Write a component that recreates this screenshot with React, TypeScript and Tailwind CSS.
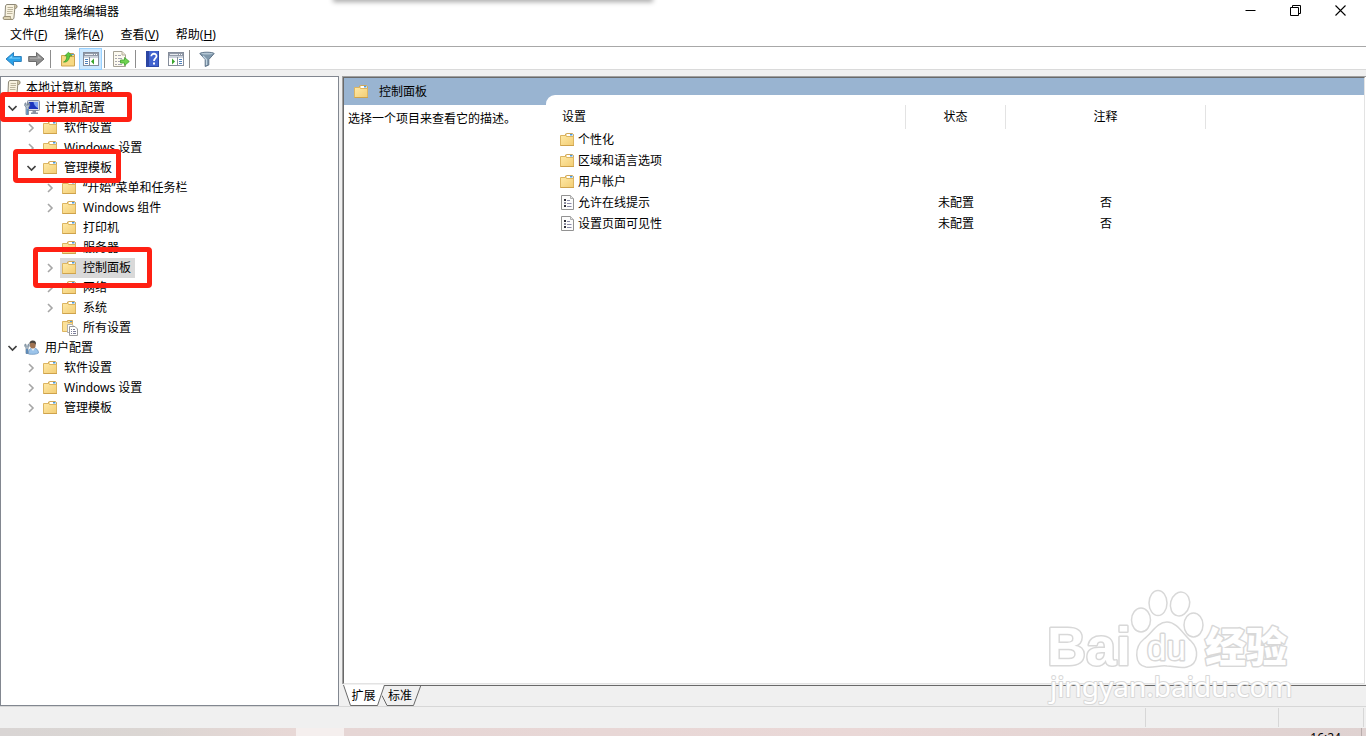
import type { ReactNode } from 'react';

function FolderIcon() {
  return (
    <svg width="16" height="16" viewBox="0 0 16 16" className="shrink-0" aria-hidden="true">
      <defs>
        <linearGradient id="folderFill" x1="0" y1="0" x2="1" y2="1">
          <stop offset="0" stopColor="#ffe9a6" />
          <stop offset="1" stopColor="#f2cd74" />
        </linearGradient>
      </defs>
      <path d="M5.500 4V2L6.500 1.500H12.500L13.500 2.500V5H5.500Z" fill="#f6dc97" stroke="#cfa75b" />
      <path d="M7 2H13V4H7Z" fill="#fff" />
      <path d="M10 2H12.500V3.500H10Z" fill="#4b9be0" />
      <path d="M.5 3.500H5.500L6.500 4.500H13.500V13.500H.5Z" fill="url(#folderFill)" stroke="#dcb562" />
      <path d="M.5 13.500H14" stroke="#cfa34c" />
    </svg>
  );
}

function SettingIcon() {
  return (
    <svg width="16" height="16" viewBox="0 0 16 16" className="shrink-0" aria-hidden="true">
      <path d="M1.500.5H10.500L13.500 3.500V14.500H1.500Z" fill="#fcfcfc" stroke="#929292" />
      <path d="M10.500.5V3.500H13.500" fill="#e4e4e4" stroke="#b0b0b0" />
      <path d="M4 4H6V6H4ZM4 10H6V12H4Z" fill="#2e2e38" />
      <path d="M4 7H6V9H4Z" fill="#8c8ca0" />
      <path d="M7 5.500H10M7 8.500H11.500M7 11.500H11.500" stroke="#8a8aa8" />
    </svg>
  );
}

function ScrollIcon() {
  return (
    <svg width="16" height="16" viewBox="0 0 16 16" className="shrink-0" aria-hidden="true">
      <path d="M4.500.5H13.500C15.500.5 15.500 4.500 13.500 4.500H12.800L12 13C12 14.500 11.500 15.500 10 15.500H2.500C.7 15.500.7 12.500 2.500 12.500H3L3.500 2Z" fill="#f8f2df" stroke="#8d8878" />
      <path d="M3 12.500H8.500C8.200 14 8.800 15.500 10.300 15.500H2.500C1 15.500 1 12.500 3 12.500Z" fill="#ddd3b4" stroke="#9b9177" />
      <path d="M12.700 4.500V2C12.700 1.200 13 .5 13.500.5C15 1 15 4 13.500 4.500Z" fill="#d8cfb4" stroke="#9b9177" />
      <path d="M5.500 3.500H11M5.500 5.500H11M5 7.500H10.500M5 9.500H10.500" stroke="#bdb59d" />
    </svg>
  );
}

function ComputerIcon() {
  return (
    <svg width="16" height="16" viewBox="0 0 16 16" className="shrink-0" aria-hidden="true">
      <rect x="3.500" y=".5" width="12" height="10" rx="1" fill="#d9dce4" stroke="#8990a0" />
      <rect x="5" y="2" width="9" height="7" fill="#1c34bd" />
      <path d="M9.500 2H14V8C12 7.500 10 5 9.500 2Z" fill="#7da0f0" />
      <path d="M8.500 11H12V12.500H14V14H7V12.500H8.500Z" fill="#8b93a3" />
      <path d="M.8 3.500V6L2 7V14.500H4.500V7L5.700 6V3.500L4.500 2.800V5H2V2.800Z" fill="#b4c0cc" stroke="#63768a" strokeWidth=".7" />
      <rect x="2.500" y="9" width="1.600" height="5.500" fill="#5f8fc0" />
    </svg>
  );
}

function UserIcon() {
  return (
    <svg width="16" height="16" viewBox="0 0 16 16" className="shrink-0" aria-hidden="true">
      <path d="M4.500 14C4.200 10 6 8 9 8C12.500 8 14.500 10 14.500 13C12 14.500 8 14.500 4.500 14Z" fill="#9cc4ea" stroke="#6f97c0" strokeWidth=".8" />
      <path d="M7 8L9 11L11 8Z" fill="#eef4fa" />
      <ellipse cx="8.800" cy="5" rx="2.900" ry="3.500" fill="#a07352" />
      <path d="M5.600 4.500C5.100 1.500 6.800.5 8.800.5C11.300.5 12.600 2 11.800 5C11.300 3 9.500 3 8 2.800C6.900 2.800 6.200 3.500 5.600 4.500Z" fill="#4a443e" />
      <path d="M.8 4.500V6.500L2 7.500V13.500H4V7.500L5.200 6.500V4.500L4.200 4V6H1.900V4Z" fill="#b9c5d0" stroke="#65788a" strokeWidth=".7" />
      <rect x="2.200" y="9" width="1.600" height="4.500" fill="#4f83b8" />
    </svg>
  );
}

function AllSettingsIcon() {
  return (
    <svg width="16" height="16" viewBox="0 0 16 16" className="shrink-0 overflow-visible" aria-hidden="true">
      <path d="M5.500 3V.5H10.500V4H5.500Z" fill="#f6dc97" stroke="#cfa75b" />
      <path d="M8 1H10V2H8Z" fill="#4b9be0" />
      <path d="M.5 1.500H5L6 2.500H10.500V11.500H.5Z" fill="#fbe19a" stroke="#dcb562" />
      <path d="M5.500 4.500H10L12 6.500V12.500H5.500Z" fill="#fff" stroke="#b0b0b0" />
      <path d="M7.500 6.500H13L15.500 9V15.500H7.500Z" fill="#fff" stroke="#9a9a9a" />
      <path d="M9 9.500H10M11 9.500H13M9 11.500H10M11 11.500H14M9 13.500H10M11 13.500H14" stroke="#7d7f9a" />
    </svg>
  );
}

function ArrowIcon({ forward = false }: { forward?: boolean }) {
  return (
    <svg width="17" height="16" viewBox="0 0 17 16" aria-hidden="true">
      {forward ? (
        <>
          <path d="M.7 5.500H8.500V1.500L16 8L8.500 14.500V10.500H.7Z" fill="#8e8e8e" stroke="#6c6c6c" />
          <path d="M2 6.800H9.800V4.500L13.500 7.500H2Z" fill="#b9b9b9" />
        </>
      ) : (
        <>
          <path d="M16.300 5.500H8.500V1.500L1 8L8.500 14.500V10.500H16.300Z" fill="#2ba3ea" stroke="#2f80bc" />
          <path d="M15 6.800H7.200V4.500L3.500 7.500H15Z" fill="#83d2fb" />
        </>
      )}
    </svg>
  );
}

function UpFolderIcon() {
  return (
    <svg width="16" height="16" viewBox="0 0 16 16" aria-hidden="true">
      <path d="M8.500 4V2.500H13.500L14.500 3.500V6H8.500Z" fill="#f6dc97" stroke="#c49b50" />
      <path d="M11 3H14V4H11Z" fill="#5b9fdd" />
      <path d="M1.500 4.500H7L8 5.500H14.500V15H1.500Z" fill="#f7d983" stroke="#cda44f" />
      <path d="M3.500 11C5.500 10.500 6.800 8 6.800 4.800H4.800L8.500 1.200L12 4.800H9.600C9.600 8.500 7 11.800 3.500 11Z" fill="#5cc93f" stroke="#3a9a28" strokeWidth=".7" />
    </svg>
  );
}

function PaneIcon({ side }: { side: 'left' | 'right' }) {
  return (
    <svg width="16" height="16" viewBox="0 0 16 16" aria-hidden="true">
      <rect x=".5" y="1.500" width="15" height="13" fill="#fff" stroke="#858d9b" />
      <path d="M1 2H15V5H1Z" fill="#939ba9" />
      <path d="M2 3.500H10" stroke="#e8ebef" />
      <path d="M11 3.500H12M13 3.500H14" stroke="#fff" />
      <path d="M1 5.500H15M1 6.500H15" stroke="#ccd2dc" />
      {side === 'left' ? (
        <>
          <path d="M6.500 6V14" stroke="#858d9b" />
          <path d="M2 8.500H5M2 10.500H5M2 12.500H5" stroke="#4f80bb" />
          <path d="M11 7.500V13.500L8 10.500Z" fill="#39a52c" />
        </>
      ) : (
        <>
          <path d="M9.500 6V14" stroke="#858d9b" />
          <path d="M11 8.500H14M11 10.500H14M11 12.500H14" stroke="#4f80bb" />
          <path d="M4 7.500V13.500L7 10.500Z" fill="#39a52c" />
        </>
      )}
    </svg>
  );
}

function ExportIcon() {
  return (
    <svg width="17" height="16" viewBox="0 0 17 16" aria-hidden="true">
      <path d="M.5.5H9L12.500 4V15.500H.5Z" fill="#fdfaf0" stroke="#a5a193" />
      <path d="M9 .5V4H12.500" fill="#ece6d2" stroke="#b3ae9e" />
      <path d="M2.500 4.500H3.500M2.500 7.500H3.500M2.500 10.500H3.500M2.500 13.500H3.500" stroke="#55556a" />
      <path d="M5 4.500H8M5 7.500H9M5 10.500H8M5 13.500H9" stroke="#a7a7b4" />
      <path d="M7.500 9H11.500V6.500L16.300 10.500L11.500 14.500V12H7.500Z" fill="#6fd350" stroke="#3fa52e" strokeWidth=".8" />
    </svg>
  );
}

function HelpIcon() {
  return (
    <svg width="16" height="16" viewBox="0 0 16 16" aria-hidden="true">
      <path d="M1 0H14V16H1Z" fill="#4263cf" />
      <path d="M1 0H4V16H1Z" fill="#2b45a2" />
      <path d="M13.500 0V16M1 15.500H14" stroke="#2f4aa8" />
      <path d="M6.300 5.300C6.300 1.800 11.700 2 11.500 5.300C11.400 7.300 9 7.600 9 10" fill="none" stroke="#fff" strokeWidth="1.800" />
      <rect x="8" y="11.500" width="2" height="2" fill="#fff" />
    </svg>
  );
}

function FilterIcon() {
  return (
    <svg width="16" height="16" viewBox="0 0 16 16" aria-hidden="true">
      <path d="M.8 2.500C3 .8 13 .8 15.200 2.500L9.800 8.500V14L6.200 15.500V8.500Z" fill="#8098ab" stroke="#60758a" />
      <ellipse cx="8" cy="2.600" rx="6" ry=".9" fill="#b4c6d4" />
      <path d="M4 5L7.500 8.500V14" fill="none" stroke="#c3d5e2" strokeWidth="1.200" />
    </svg>
  );
}

type Node = {
  label: string;
  level: 0 | 1 | 2 | 3;
  state?: 'open' | 'closed';
  icon?: ReactNode;
  selected?: boolean;
  mark?: string;
};

const indents = ['pl-[2px]', 'pl-[3px]', 'pl-[22px]', 'pl-[41px]'];

const nodes: Node[] = [
  { label: '本地计算机 策略', level: 0, icon: <ScrollIcon /> },
  { label: '计算机配置', level: 1, state: 'open', icon: <ComputerIcon />, mark: '-top-[6px] -left-px h-[30px] w-[132px]' },
  { label: '软件设置', level: 2, state: 'closed' },
  { label: 'Windows 设置', level: 2, state: 'closed' },
  { label: '管理模板', level: 2, state: 'open', mark: '-top-[9px] left-[12px] h-[34px] w-[108px]' },
  { label: '“开始”菜单和任务栏', level: 3, state: 'closed' },
  { label: 'Windows 组件', level: 3, state: 'closed' },
  { label: '打印机', level: 3 },
  { label: '服务器', level: 3 },
  { label: '控制面板', level: 3, state: 'closed', selected: true, mark: '-top-[11px] left-[32px] h-[41px] w-[119px]' },
  { label: '网络', level: 3, state: 'closed' },
  { label: '系统', level: 3, state: 'closed' },
  { label: '所有设置', level: 3, icon: <AllSettingsIcon /> },
  { label: '用户配置', level: 1, state: 'open', icon: <UserIcon /> },
  { label: '软件设置', level: 2, state: 'closed' },
  { label: 'Windows 设置', level: 2, state: 'closed' },
  { label: '管理模板', level: 2, state: 'closed' },
];

function TreeRow({ node }: { node: Node }) {
  return (
    <li
      role="treeitem"
      aria-level={node.level + 1}
      aria-expanded={node.state ? node.state === 'open' : undefined}
      aria-selected={!!node.selected}
      className={`relative flex h-5 items-center gap-[2px] ${indents[node.level]}`}
    >
      {node.level > 0 && (
        <span className="flex w-4 shrink-0 justify-center">
          {node.state && (
            <button type="button" aria-label={`${node.state === 'open' ? '折叠' : '展开'} ${node.label}`}>
              <svg width="10" height="10" viewBox="0 0 10 10" className="block" aria-hidden="true">
                {node.state === 'open' ? (
                  <path d="M1.500 3L5.500 7L9.500 3" fill="none" stroke="#404040" strokeWidth="1.600" />
                ) : (
                  <path d="M3 1L7 5L3 9" fill="none" stroke="#a6a6a6" strokeWidth="1.600" />
                )}
              </svg>
            </button>
          )}
        </span>
      )}
      <button
        type="button"
        className={`flex h-5 items-center gap-[5px] pr-1 pl-[2px] whitespace-nowrap ${node.selected ? 'bg-[#d9d9d9]' : ''}`}
      >
        {node.icon ?? <FolderIcon />}
        {node.label}
      </button>
      {node.mark && (
        <span className={`pointer-events-none absolute z-10 rounded border-[5px] border-[#ff2013] ${node.mark}`} />
      )}
    </li>
  );
}

function ToolButton({ label, active, children }: { label: string; active?: boolean; children: ReactNode }) {
  return (
    <button
      type="button"
      aria-label={label}
      aria-pressed={active}
      className={`flex h-[22px] w-[23px] items-center justify-center ${active ? 'border border-[#99d1ff] bg-[#cce8ff]' : ''}`}
    >
      {children}
    </button>
  );
}

function ToolDivider() {
  return <span className="mr-[5px] ml-[2px] h-[18px] w-px bg-[#8d8d8d]" />;
}

const menus = [
  ['文件', 'F'],
  ['操作', 'A'],
  ['查看', 'V'],
  ['帮助', 'H'],
];

const rows = [
  { name: '个性化', folder: true, status: '', comment: '' },
  { name: '区域和语言选项', folder: true, status: '', comment: '' },
  { name: '用户帐户', folder: true, status: '', comment: '' },
  { name: '允许在线提示', folder: false, status: '未配置', comment: '否' },
  { name: '设置页面可见性', folder: false, status: '未配置', comment: '否' },
];

function Watermark() {
  return (
    <svg
      width="256"
      height="122"
      viewBox="0 0 256 122"
      className="pointer-events-none absolute right-[70px] bottom-[29px] z-20"
      fill="#fff"
      stroke="#d8d8d8"
      strokeWidth="1.500"
      strokeLinejoin="round"
      aria-hidden="true"
    >
      <text x="7" y="80" fontFamily="Liberation Sans, Arial, sans-serif" fontWeight="700" fontSize="54" strokeWidth="3" paintOrder="stroke">Bai</text>
      <ellipse cx="101" cy="35" rx="9.500" ry="12" />
      <ellipse cx="118" cy="18" rx="9" ry="12.500" />
      <ellipse cx="140" cy="19" rx="9.500" ry="12" transform="rotate(14 140 19)" />
      <ellipse cx="153.500" cy="40" rx="9.500" ry="12" />
      <path d="M127 37C117 37 112 48 104 54C94 62 94 80 106 82C114 83 120 80 127 81C134 81 140 84 147 82C159 79 159 64 151 56C143 49 137 37 127 37Z" />
      <text x="107" y="75" fontFamily="Liberation Sans, Arial, sans-serif" fontSize="35" strokeWidth="3" paintOrder="stroke">du</text>
      <text x="165" y="77" fontFamily="Noto Sans CJK SC, sans-serif" fontWeight="900" fontSize="41" strokeWidth="3" paintOrder="stroke">经验</text>
      <text x="10" y="112" fontFamily="Noto Sans, sans-serif" fontSize="28" strokeWidth="2" paintOrder="stroke">jingyan.baidu.com</text>
    </svg>
  );
}

export default function App() {
  return (
    <div className="relative flex h-screen flex-col overflow-hidden bg-white font-['Noto_Sans','Noto_Sans_CJK_SC',sans-serif] text-[12px] leading-4 text-black">
      <div className="pointer-events-none absolute -top-1 left-[334px] h-1 w-[318px] shadow-[0_1px_5px_1px_rgba(0,0,0,0.35)]" />

      <header className="flex h-6 shrink-0 items-center pr-[3px] pl-[2px]">
        <ScrollIcon />
        <h1 className="ml-[5px] flex-1">本地组策略编辑器</h1>
        <div className="-mt-1 flex h-5">
          <button type="button" aria-label="最小化" className="flex w-[45px] items-center justify-center">
            <svg width="11" height="11" viewBox="0 0 11 11" fill="none" stroke="#000"><path d="M.5 5.500H10.500" /></svg>
          </button>
          <button type="button" aria-label="还原" className="flex w-[45px] items-center justify-center">
            <svg width="11" height="11" viewBox="0 0 11 11" fill="none" stroke="#000"><path d="M.5 2.500H8.500V10.500H.5ZM2.500 2.500V.5H10.500V8.500H8.500" /></svg>
          </button>
          <button type="button" aria-label="关闭" className="flex w-[45px] items-center justify-center">
            <svg width="11" height="11" viewBox="0 0 11 11" fill="none" stroke="#000" strokeWidth="1.100"><path d="M.5.5L10.500 10.500M10.500.5L.5 10.500" /></svg>
          </button>
        </div>
      </header>

      <nav aria-label="菜单" className="flex h-[22px] shrink-0 items-center gap-px pl-[2px]">
        {menus.map(([name, key]) => (
          <button key={key} type="button" className="px-2">
            {name}(<u className="underline-offset-1">{key}</u>)
          </button>
        ))}
      </nav>

      <div role="toolbar" aria-label="工具栏" className="flex h-6 shrink-0 items-center border-y border-t-[#a8a8a8] border-b-[#dadada] pt-px pl-[2px]">
        <ToolButton label="后退"><ArrowIcon /></ToolButton>
        <ToolButton label="前进"><ArrowIcon forward /></ToolButton>
        <ToolDivider />
        <ToolButton label="上移一级"><UpFolderIcon /></ToolButton>
        <ToolButton label="显示/隐藏控制台树" active><PaneIcon side="left" /></ToolButton>
        <ToolDivider />
        <ToolButton label="导出列表"><ExportIcon /></ToolButton>
        <ToolDivider />
        <ToolButton label="帮助"><HelpIcon /></ToolButton>
        <ToolButton label="显示/隐藏操作窗格"><PaneIcon side="right" /></ToolButton>
        <ToolDivider />
        <ToolButton label="筛选器选项"><FilterIcon /></ToolButton>
      </div>

      <main className="flex min-h-0 flex-1 gap-[3px] bg-[#f0f0f0] pt-[6px]">
        <aside className="w-[339px] shrink-0 border border-[#828790] bg-white">
          <ul role="tree" aria-label="本地计算机 策略" className="pt-px">
            {nodes.map((node, i) => (
              <TreeRow key={i} node={node} />
            ))}
          </ul>
        </aside>

        <div className="flex min-w-0 flex-1 flex-col">
          <section className="flex min-h-0 flex-1 border-t border-l border-[#a0a0a0] bg-white pr-px">
            <div className="flex flex-1 border border-t-[#696969] border-r-[#e3e3e3] border-b-[#e3e3e3] border-l-[#696969] bg-[#99b4d1]">
              <div className="flex w-[202px] shrink-0 flex-col">
                <h2 className="flex h-[27px] shrink-0 items-center gap-[9px] pl-[10px]">
                  <FolderIcon />
                  控制面板
                </h2>
                <p className="flex-1 bg-white px-1 pt-[6px] whitespace-nowrap">选择一个项目来查看它的描述。</p>
              </div>
              <div className="mt-[17px] min-w-0 flex-1 rounded-tl-[9px] bg-white pt-[10px]">
                <table className="w-full table-fixed border-separate border-spacing-0">
                  <colgroup>
                    <col className="w-[360px]" />
                    <col className="w-[100px]" />
                    <col className="w-[200px]" />
                    <col />
                  </colgroup>
                  <thead>
                    <tr className="h-6">
                      <th scope="col" className="border-r border-[#e3e3e3] p-0 pl-4 text-left font-normal">设置</th>
                      <th scope="col" className="border-r border-[#e3e3e3] p-0 text-center font-normal">状态</th>
                      <th scope="col" className="border-r border-[#e3e3e3] p-0 text-center font-normal">注释</th>
                      <td />
                    </tr>
                  </thead>
                  <tbody>
                    {rows.map((row) => (
                      <tr key={row.name} className="h-[21px]">
                        <td className="p-0 pl-[14px]">
                          <span className="flex items-center gap-[2px]">
                            {row.folder ? <FolderIcon /> : <SettingIcon />}
                            {row.name}
                          </span>
                        </td>
                        <td className="p-0 text-center">{row.status}</td>
                        <td className="p-0 text-center">{row.comment}</td>
                        <td />
                      </tr>
                    ))}
                  </tbody>
                </table>
              </div>
            </div>
          </section>

          <div role="tablist" className="mt-px flex h-[21px] shrink-0 pl-px">
            <button type="button" role="tab" aria-selected="true" className="relative z-10 h-[21px] w-[41px]">
              <svg width="42" height="21" viewBox="0 0 42 21" className="absolute inset-0" aria-hidden="true">
                <path d="M0 0L7.500 20.500H34.500L41.500 0Z" fill="#fff" />
                <path d="M.5 0L7.500 20.500H34.500L41.500 0" fill="none" stroke="#696969" />
              </svg>
              <span className="relative">扩展</span>
            </button>
            <button type="button" role="tab" aria-selected="false" className="relative h-[21px] w-[37px] border-t border-[#696969] pr-[5px]">
              <svg width="40" height="21" viewBox="0 0 40 21" className="absolute -top-px -left-[2px]" aria-hidden="true">
                <path d="M0 10.500L5 20.500H31.500L39 0" fill="none" stroke="#696969" />
              </svg>
              <span className="relative">标准</span>
            </button>
            <div className="flex-1 border-t border-[#696969]" />
          </div>
        </div>
      </main>

      <footer className="flex h-[22px] shrink-0 justify-end border-t border-[#d7d7d7] bg-[#f0f0f0] py-px pr-[2px]">
        <div className="w-[133px] border-l border-[#d7d7d7]" />
        <div className="w-[86px] border-x border-[#d7d7d7]" />
      </footer>

      <div className="flex h-2 shrink-0 overflow-hidden bg-[#e6d6d5]">
        <div className="w-[296px] bg-linear-to-r from-[#d9d5d4] via-[#dbd6d3] to-[#e8d8d6]" />
        <div className="w-12 bg-[#f5efee]" />
        <div className="flex flex-1 justify-end bg-linear-to-r from-[#e6d6d5] via-[#ead8d7] to-[#dfd2d1] pr-1">
          <time className="mr-5 pt-[2px]">16:24</time>
          <span className="h-2 w-px bg-[#b9adac]" />
        </div>
      </div>

      <Watermark />
    </div>
  );
}
